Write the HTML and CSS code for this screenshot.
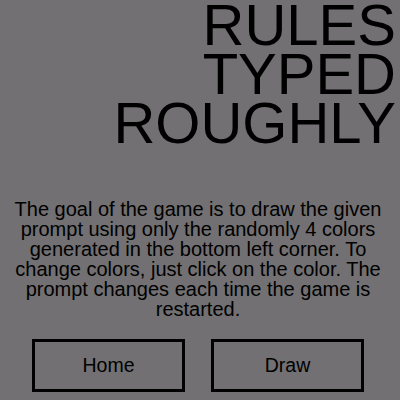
FILE: index.html
```html
<!DOCTYPE html>
<html>
<head>
<meta charset="utf-8">
<link rel="stylesheet" href="styles.css">
</head>
<body>
<div class="page">
  <h1 class="title">RULES<br>TYPED<br>ROUGHLY</h1>
  <p class="rules">The goal of the game is to draw the given prompt using only the randomly 4 colors generated in the bottom left corner. To change colors, just click on the color. The prompt changes each time the game is restarted.</p>
  <div class="buttons">
    <button class="btn">Home</button>
    <button class="btn">Draw</button>
  </div>
</div>
</body>
</html>
```
FILE: styles.css
```css
html, body {
  margin: 0;
  padding: 0;
  background: #727072;
  width: 400px;
  height: 400px;
  overflow: hidden;
}
.page {
  font-family: "Liberation Sans", Arial, sans-serif;
  color: #000;
  display: flex;
  flex-direction: column;
}
.title {
  margin: 0;
  padding: 0 4px 0 0;
  text-align: right;
  font-weight: normal;
  font-size: 58px;
  line-height: 49px;
  letter-spacing: 0;
}
.rules {
  margin: 52px 10px 0 6px;
  text-align: center;
  font-size: 20px;
  line-height: 20px;
}
.buttons {
  display: flex;
  justify-content: center;
  gap: 26px;
  margin-top: 20px;
  padding-right: 4px;
}
.btn {
  width: 153px;
  height: 53px;
  background: transparent;
  border: 3px solid #000;
  font-family: "Liberation Sans", Arial, sans-serif;
  font-size: 19.5px;
  color: #000;
  padding: 0;
  box-sizing: border-box;
}
```
